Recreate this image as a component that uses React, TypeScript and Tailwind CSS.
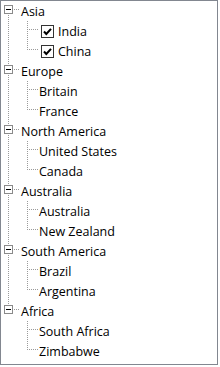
import * as React from 'react';

interface TreeChild {
    label: string;
    checked?: boolean;
}

interface TreeRoot {
    label: string;
    children: TreeChild[];
}

const regions: TreeRoot[] = [
    { label: 'Asia', children: [{ label: 'India', checked: true }, { label: 'China', checked: true }] },
    { label: 'Europe', children: [{ label: 'Britain' }, { label: 'France' }] },
    { label: 'North America', children: [{ label: 'United States' }, { label: 'Canada' }] },
    { label: 'Australia', children: [{ label: 'Australia' }, { label: 'New Zealand' }] },
    { label: 'South America', children: [{ label: 'Brazil' }, { label: 'Argentina' }] },
    { label: 'Africa', children: [{ label: 'South Africa' }, { label: 'Zimbabwe' }] },
];

const LINE = '#9a9a9a';
const MID = 8; // y of the branch line inside a 20px row

// one 19px indent column with the dotted tree lines
function Gutter({ up, down, branch, box }: { up?: boolean; down?: boolean; branch?: boolean; box?: boolean }) {
    return (
        <svg width={19} height={20} className="shrink-0 block" shapeRendering="crispEdges">
            {up && <line x1={7.5} y1={0} x2={7.5} y2={MID + 1} stroke={LINE} strokeDasharray="1 1" />}
            {down && <line x1={7.5} y1={MID} x2={7.5} y2={20} stroke={LINE} strokeDasharray="1 1" />}
            {branch && <line x1={7} y1={MID + 0.5} x2={19} y2={MID + 0.5} stroke={LINE} strokeDasharray="1 1" />}
            {box && (
                <g>
                    <rect x={3.5} y={MID - 3.5} width={8} height={8} fill="#ffffff" stroke="#8a8a8a" />
                    <line x1={5} y1={MID + 0.5} x2={10} y2={MID + 0.5} stroke="#000000" />
                </g>
            )}
        </svg>
    );
}

function CheckBox() {
    return (
        <svg width={13} height={13} className="shrink-0 block ml-[2px] mr-[4px]" shapeRendering="crispEdges">
            <rect x={0.5} y={0.5} width={12} height={12} fill="#ffffff" stroke="#333333" />
            <path d="M3 6.5 L5.3 9 L10 3.8" fill="none" stroke="#000000" strokeWidth={2} shapeRendering="geometricPrecision" />
        </svg>
    );
}

export default function App() {
    return (
        <div
            className="w-[218px] h-[365px] border border-[#828790] bg-white overflow-hidden text-[12.5px] text-black"
            style={{ fontFamily: '"Open Sans", "Noto Sans", sans-serif' }}
        >
            {regions.map((root, ri) => {
                const first = ri === 0;
                const last = ri === regions.length - 1;
                return (
                    <div key={root.label}>
                        <div className="flex h-[20px] items-center">
                            <Gutter up={!first} down={!last} branch box />
                            <span className="pl-[1px] pt-[2px] leading-[18px] whitespace-nowrap">{root.label}</span>
                        </div>
                        {root.children.map((child, ci) => (
                            <div key={child.label} className="flex h-[20px] items-center">
                                <Gutter up={!last} down={!last} />
                                <Gutter up down={ci < root.children.length - 1} branch />
                                {child.checked && <CheckBox />}
                                <span className="pt-[2px] leading-[18px] whitespace-nowrap">{child.label}</span>
                            </div>
                        ))}
                    </div>
                );
            })}
        </div>
    );
}
